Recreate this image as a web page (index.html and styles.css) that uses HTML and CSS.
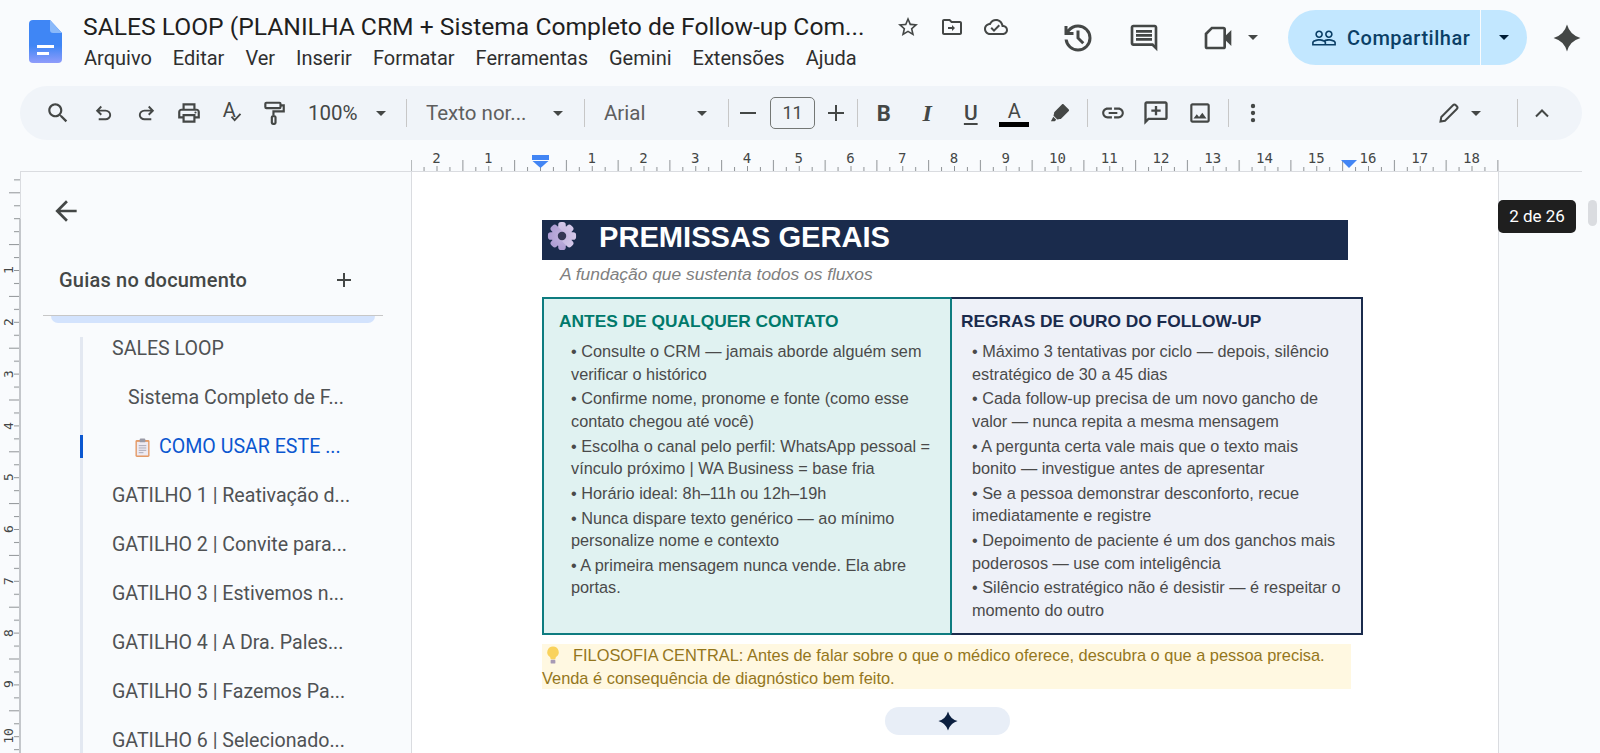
FILE: index.html
```html
<!DOCTYPE html>
<html lang="pt-BR">

<head>
    <meta charset="UTF-8" />
    <meta name="viewport" content="width=device-width, initial-scale=1.0">
    <title>SALES LOOP</title>
    <link rel="stylesheet" href="styles.css">
</head>

<body>
    <div class="app">
        <header class="header">
            <svg class="logo" viewBox="0 0 33 43">
                <defs>
                    <linearGradient id="docGrad" x1="0" y1="0" x2="0" y2="1">
                        <stop offset="0.6" stop-color="#3f86f5" />
                        <stop offset="1" stop-color="#8f9cfb" />
                    </linearGradient>
                </defs>
                <path d="M4 0H21L33 13V39a4 4 0 0 1-4 4H4a4 4 0 0 1-4-4V4a4 4 0 0 1 4-4z" fill="url(#docGrad)" />
                <path d="M21 0L33 13H24a3 3 0 0 1-3-3z" fill="#8ab9fa" />
                <path d="M8 25H25V28H8zM8 32H20V35H8z" fill="#fff" />
            </svg>
            <div class="title-col">
                <div class="title-row">
                    <span class="doc-title">SALES LOOP (PLANILHA CRM + Sistema Completo de Follow-up Com...</span>
                    <div class="title-icons">
                        <svg class="ic ic-24" viewBox="0 0 24 24"><path d="M22 9.24l-7.19-.62L12 2 9.19 8.63 2 9.24l5.46 4.73L5.82 21 12 17.27 18.18 21l-1.63-7.03L22 9.24zM12 15.4l-3.76 2.27 1-4.28-3.32-2.88 4.38-.38L12 6.1l1.71 4.04 4.38.38-3.32 2.88 1 4.28L12 15.4z" /></svg>
                        <svg class="ic ic-24" viewBox="0 0 24 24"><path d="M20 6h-8l-2-2H4c-1.1 0-2 .9-2 2v12c0 1.1.9 2 2 2h16c1.1 0 2-.9 2-2V8c0-1.1-.9-2-2-2zm0 12H4V6h5.17l2 2H20v10zM12 12H8v2h4v2l3-3-3-3z" /></svg>
                        <svg class="ic ic-24" viewBox="0 0 24 24"><path d="M19.35 10.04C18.67 6.59 15.64 4 12 4 9.11 4 6.6 5.64 5.35 8.04 2.34 8.36 0 10.91 0 14c0 3.31 2.69 6 6 6h13c2.76 0 5-2.24 5-5 0-2.64-2.05-4.78-4.65-4.96zM19 18H6c-2.21 0-4-1.79-4-4 0-2.05 1.53-3.76 3.56-3.97l1.07-.11.5-.95C8.08 7.14 9.94 6 12 6c2.62 0 4.88 1.86 5.39 4.43l.3 1.5 1.53.11c1.56.1 2.78 1.41 2.78 2.96 0 1.65-1.35 3-3 3zm-9-3.82l-2.09-2.09L6.5 13.5 10 17l6.01-6.01-1.41-1.41z" /></svg>
                    </div>
                </div>
                <nav class="menu">
                    <span>Arquivo</span>
                    <span>Editar</span>
                    <span>Ver</span>
                    <span>Inserir</span>
                    <span>Formatar</span>
                    <span>Ferramentas</span>
                    <span>Gemini</span>
                    <span>Extensões</span>
                    <span>Ajuda</span>
                </nav>
            </div>
            <div class="actions">
                <svg class="ic ic-36" viewBox="0 0 24 24"><path d="M12 21q-3.45 0-6.012-2.287T3.05 13H5.1q.35 2.6 2.313 4.3T12 19q2.925 0 4.963-2.037T19 12q0-2.925-2.037-4.963T12 5q-1.725 0-3.225.8T6.25 8H9v2H3V4h2v2.35q1.275-1.6 3.113-2.475T12 3q3.75 0 6.375 2.625T21 12q0 3.75-2.625 6.375T12 21Zm2.8-4.8L11 12.4V7h2v4.6l3.2 3.2-1.4 1.4Z" /></svg>
                <svg class="ic ic-32 gap-comment" viewBox="0 0 24 24"><path d="M21.99 4c0-1.1-.89-2-1.99-2H4c-1.1 0-2 .9-2 2v12c0 1.1.9 2 2 2h14l4 4-.01-18zM20 4v13.17L18.83 16H4V4h16zM6 12h12v2H6zm0-3h12v2H6zm0-3h12v2H6z" /></svg>
                <svg class="ic ic-32 gap-video" viewBox="0 0 24 24"><path d="M7 3.5h9a2 2 0 0 1 2 2v13a2 2 0 0 1-2 2H4a2 2 0 0 1-2-2V8.5zm.8 2L4 9.3V18.5h12V5.5z" /><path d="M18 10L22 6v12l-4-4z" /></svg>
                <span class="caret gap-caret"></span>
                <div class="share">
                    <div class="share-main">
                        <svg class="ic share-icon" viewBox="0 0 24 24"><path d="M16.5 13c-1.2 0-3.07.34-4.5 1-1.43-.67-3.3-1-4.5-1C5.33 13 1 14.08 1 16.25V19h22v-2.75c0-2.17-4.33-3.25-6.5-3.25zm-4 4.5h-10v-1.25c0-.54 2.56-1.75 5-1.75s5 1.21 5 1.75v1.25zm9 0H14v-1.25c0-.46-.2-.86-.52-1.22.88-.3 1.96-.53 3.02-.53 2.44 0 5 1.21 5 1.75v1.25zM7.5 12c1.93 0 3.5-1.57 3.5-3.5S9.43 5 7.5 5 4 6.57 4 8.5 5.57 12 7.5 12zm0-5.5c1.1 0 2 .9 2 2s-.9 2-2 2-2-.9-2-2 .9-2 2-2zm9 5.5c1.93 0 3.5-1.57 3.5-3.5S18.43 5 16.5 5 13 6.57 13 8.5s1.57 3.5 3.5 3.5zm0-5.5c1.1 0 2 .9 2 2s-.9 2-2 2-2-.9-2-2 .9-2 2-2z" /></svg>
                        <span>Compartilhar</span>
                    </div>
                    <div class="share-more"><span class="caret caret-dark"></span></div>
                </div>
                <svg class="ic gemini" viewBox="0 0 24 24"><path d="M12 .5Q14.5 9.5 23.5 12Q14.5 14.5 12 23.5Q9.5 14.5 .5 12Q9.5 9.5 12 .5Z" /></svg>
            </div>
        </header>

        <div class="toolbar">
            <div class="tb-btn"><svg class="ic ic-26" viewBox="0 0 24 24"><path d="M15.5 14h-.79l-.28-.27C15.41 12.59 16 11.11 16 9.5 16 5.91 13.09 3 9.5 3S3 5.91 3 9.5 5.91 16 9.5 16c1.61 0 3.09-.59 4.23-1.57l.27.28v.79l5 4.99L20.49 19l-4.99-5zm-6 0C7.01 14 5 11.99 5 9.5S7.01 5 9.5 5 14 7.01 14 9.5 11.99 14 9.5 14z" /></svg></div>
            <div class="tb-btn tb-undo"><svg class="ic ic-23" viewBox="0 0 24 24"><path d="M7 19v-2h7.1q1.575 0 2.738-1t1.162-2.5q0-1.5-1.162-2.5T14.1 10H7.8l2.6 2.6L9 14 4 9l5-5 1.4 1.4L7.8 8h6.3q2.425 0 4.163 1.575T20 13.5q0 2.35-1.737 3.925T14.1 19H7Z" /></svg></div>
            <div class="tb-btn"><svg class="ic ic-23 flip" viewBox="0 0 24 24"><path d="M7 19v-2h7.1q1.575 0 2.738-1t1.162-2.5q0-1.5-1.162-2.5T14.1 10H7.8l2.6 2.6L9 14 4 9l5-5 1.4 1.4L7.8 8h6.3q2.425 0 4.163 1.575T20 13.5q0 2.35-1.737 3.925T14.1 19H7Z" /></svg></div>
            <div class="tb-btn"><svg class="ic ic-26" viewBox="0 0 24 24"><path d="M19 8h-1V3H6v5H5c-1.66 0-3 1.34-3 3v6h4v4h12v-4h4v-6c0-1.66-1.34-3-3-3zM8 5h8v3H8V5zm8 12v2H8v-4h8v2zm2-2v-2H6v2H4v-4c0-.55.45-1 1-1h14c.55 0 1 .45 1 1v4h-2z" /><circle cx="18" cy="11.5" r="1" /></svg></div>
            <div class="tb-btn spell">
                <span class="spell-a">A</span>
                <svg class="spell-check" viewBox="0 0 12 10"><path d="M1 4l3.5 4L11 1" /></svg>
            </div>
            <div class="tb-btn"><svg class="ic-line ic-26" viewBox="0 0 24 24"><rect x="4" y="2.5" width="14" height="5" rx="1" /><path d="M18 5h3v5.5H11.5V14.5" /><rect x="10" y="15" width="3.4" height="7" rx="1" /></svg></div>
            <div class="tb-zoom">
                <span class="tb-text">100%</span>
                <span class="caret"></span>
            </div>
            <span class="tb-sep"></span>
            <div class="tb-select tb-style">
                <span class="tb-text">Texto nor...</span>
                <span class="caret"></span>
            </div>
            <span class="tb-sep"></span>
            <div class="tb-select tb-font">
                <span class="tb-text">Arial</span>
                <span class="caret"></span>
            </div>
            <span class="tb-sep"></span>
            <div class="tb-size">
                <span class="size-sign">
                    <svg class="ic ic-20" viewBox="0 0 20 20"><path d="M2 9h16v2H2z" /></svg>
                </span>
                <span class="size-box">11</span>
                <span class="size-sign size-plus">
                    <svg class="ic ic-20" viewBox="0 0 20 20"><path d="M2 9h7V2h2v7h7v2h-7v7H9v-7H2z" /></svg>
                </span>
            </div>
            <span class="tb-sep"></span>
            <div class="tb-btn tb-wide tb-b">B</div>
            <div class="tb-btn tb-wide tb-i">I</div>
            <div class="tb-btn tb-wide tb-u">U</div>
            <div class="tb-btn tb-wide tb-a">
                <span>A</span>
                <span class="color-bar"></span>
            </div>
            <div class="tb-btn tb-wide tb-mark"><svg class="ic ic-24" viewBox="0 0 24 24"><path d="M15.5 3.2l5.3 5.3c.4.4.4 1 0 1.4l-8 8-1 .1-2.4.6-3.9-3.9.6-2.4.1-1 7.9-8.1c.4-.4 1-.4 1.4 0zM5.3 15.7l3 3-1.6 1.5H2.9z" /></svg></div>
            <span class="tb-sep sep-insert"></span>
            <div class="tb-btn tb-wide tb-link"><svg class="ic ic-26" viewBox="0 0 24 24"><path d="M3.9 12c0-1.71 1.39-3.1 3.1-3.1h4V7H7c-2.76 0-5 2.24-5 5s2.24 5 5 5h4v-1.9H7c-1.71 0-3.1-1.39-3.1-3.1zM8 13h8v-2H8v2zm9-6h-4v1.9h4c1.71 0 3.1 1.39 3.1 3.1s-1.39 3.1-3.1 3.1h-4V17h4c2.76 0 5-2.24 5-5s-2.24-5-5-5z" /></svg></div>
            <div class="tb-btn tb-wide"><svg class="ic ic-28" viewBox="0 0 24 24"><path d="M4 2h16c1.1 0 2 .9 2 2v12c0 1.1-.9 2-2 2H6l-4 4V4c0-1.1.9-2 2-2zm0 2v13.2L5.2 16H20V4zM11 6h2v3h3v2h-3v3h-2v-3H8V9h3z" /></svg></div>
            <div class="tb-btn tb-wide"><svg class="ic ic-26" viewBox="0 0 24 24"><path d="M19 5v14H5V5h14m0-2H5c-1.1 0-2 .9-2 2v14c0 1.1.9 2 2 2h14c1.1 0 2-.9 2-2V5c0-1.1-.9-2-2-2zm-4.86 8.86l-3 3.87L9 13.14 6 17h12l-3.86-5.14z" /></svg></div>
            <span class="tb-sep sep-more"></span>
            <div class="tb-btn tb-wide tb-link"><svg class="ic ic-26" viewBox="0 0 24 24"><circle cx="12" cy="5.5" r="2" /><circle cx="12" cy="12" r="2" /><circle cx="12" cy="18.5" r="2" /></svg></div>
            <div class="tb-mode">
                <svg class="ic-line ic-24" viewBox="0 0 24 24"><path d="M3.5 20.5l.8-4.5L16 4.2c.8-.8 2-.8 2.8 0l1 1c.8.8.8 2 0 2.8L8 19.7z" /></svg>
                <span class="caret"></span>
            </div>
            <span class="tb-sep sep-collapse"></span>
            <svg class="chevron" viewBox="0 0 16 10"><path d="M2 8.5L8 2.5l6 6" /></svg>
        </div>

        <svg class="ruler" viewBox="0 0 1600 32">
            <defs>
                <pattern id="hTicks" x="540" y="0" width="51.75" height="32" patternUnits="userSpaceOnUse">
                    <rect x="0" y="26" width="1" height="5" />
                    <rect x="12.9" y="27" width="1" height="4" />
                    <rect x="25.9" y="20" width="1" height="11" />
                    <rect x="38.8" y="27" width="1" height="4" />
                </pattern>
            </defs>
            <rect x="411" y="18" width="1088" height="13" fill="url(#hTicks)" />
            <rect x="20" y="31" width="1562" height="1" class="ruler-line" />
            <g class="ruler-nums">
                <text x="436.5" y="23">2</text>
                <text x="488.25" y="23">1</text>
                <text x="591.75" y="23">1</text>
                <text x="643.5" y="23">2</text>
                <text x="695.25" y="23">3</text>
                <text x="747" y="23">4</text>
                <text x="798.75" y="23">5</text>
                <text x="850.5" y="23">6</text>
                <text x="902.25" y="23">7</text>
                <text x="954" y="23">8</text>
                <text x="1005.75" y="23">9</text>
                <text x="1057.5" y="23">10</text>
                <text x="1109.25" y="23">11</text>
                <text x="1161" y="23">12</text>
                <text x="1212.75" y="23">13</text>
                <text x="1264.5" y="23">14</text>
                <text x="1316.25" y="23">15</text>
                <text x="1368" y="23">16</text>
                <text x="1419.75" y="23">17</text>
                <text x="1471.5" y="23">18</text>
            </g>
            <rect x="532" y="15" width="17" height="5" class="ruler-mark" />
            <path d="M532.5 21h16l-8 7z" class="ruler-mark" />
            <path d="M1341 20h16l-8 8z" class="ruler-mark" />
        </svg>

        <div class="workspace">
            <svg class="v-ruler" viewBox="0 0 21 581">
                <defs>
                    <pattern id="vTicks" x="0" y="98" width="21" height="51.8" patternUnits="userSpaceOnUse">
                        <rect x="14" y="0" width="6" height="1" />
                        <rect x="14" y="13" width="6" height="1" />
                        <rect x="9" y="25.9" width="11" height="1" />
                        <rect x="14" y="38.9" width="6" height="1" />
                    </pattern>
                </defs>
                <rect x="0" y="0" width="20" height="581" fill="url(#vTicks)" />
                <rect x="20" y="0" width="1" height="47" class="ruler-line" />
                <rect x="19" y="47" width="2" height="534" class="ruler-dark" />
                <g class="ruler-nums v-nums">
                    <text transform="translate(12.5 98) rotate(-90)">1</text>
                    <text transform="translate(12.5 150) rotate(-90)">2</text>
                    <text transform="translate(12.5 202) rotate(-90)">3</text>
                    <text transform="translate(12.5 254) rotate(-90)">4</text>
                    <text transform="translate(12.5 305) rotate(-90)">5</text>
                    <text transform="translate(12.5 357) rotate(-90)">6</text>
                    <text transform="translate(12.5 409) rotate(-90)">7</text>
                    <text transform="translate(12.5 461) rotate(-90)">8</text>
                    <text transform="translate(12.5 512) rotate(-90)">9</text>
                    <text transform="translate(12.5 564) rotate(-90)">10</text>
                </g>
            </svg>

            <aside class="sidebar">
                <svg class="back" viewBox="0 0 24 24"><path d="M20 11H7.83l5.59-5.59L12 4l-8 8 8 8 1.41-1.41L7.83 13H20v-2z" /></svg>
                <div class="guides-head">
                    <span>Guias no documento</span>
                    <svg class="ic ic-20" viewBox="0 0 20 20"><path d="M3 9h6V3h2v6h6v2h-6v6H9v-6H3z" /></svg>
                </div>
                <div class="guides-line"></div>
                <div class="guides-strip"></div>
                <ul class="outline">
                    <li class="lvl-1">SALES LOOP</li>
                    <li class="lvl-2">Sistema Completo de F...</li>
                    <li class="lvl-3 active">
                        <svg class="clipboard" viewBox="0 0 16 20">
                            <rect x="0.5" y="2" width="15" height="18" rx="1.5" fill="#e49a66" />
                            <rect x="2" y="4" width="12" height="14.5" fill="#eeeaf2" />
                            <rect x="5" y="0.5" width="6" height="4" rx="1" fill="#9a9aa6" />
                            <path d="M4 8h8M4 10.5h8M4 13h8M4 15.5h5" stroke="#a5a5b3" stroke-width="1" />
                        </svg>
                        COMO USAR ESTE ...
                    </li>
                    <li class="lvl-1">GATILHO 1 | Reativação d...</li>
                    <li class="lvl-1">GATILHO 2 | Convite para...</li>
                    <li class="lvl-1">GATILHO 3 | Estivemos n...</li>
                    <li class="lvl-1">GATILHO 4 | A Dra. Pales...</li>
                    <li class="lvl-1">GATILHO 5 | Fazemos Pa...</li>
                    <li class="lvl-1">GATILHO 6 | Selecionado...</li>
                </ul>
            </aside>

            <main class="doc">
                <div class="banner">
                    <svg class="gear" viewBox="0 0 32 32">
                        <defs>
                            <linearGradient id="gearGrad" x1="0" y1="0" x2="0" y2="1">
                                <stop offset="0" stop-color="#d5c9ea" />
                                <stop offset="1" stop-color="#ad9cd3" />
                            </linearGradient>
                        </defs>
                        <g fill="url(#gearGrad)">
                            <circle cx="16" cy="16" r="11" />
                            <rect x="12" y="1" width="8" height="30" rx="3" />
                            <rect x="12" y="1" width="8" height="30" rx="3" transform="rotate(45 16 16)" />
                            <rect x="12" y="1" width="8" height="30" rx="3" transform="rotate(90 16 16)" />
                            <rect x="12" y="1" width="8" height="30" rx="3" transform="rotate(135 16 16)" />
                        </g>
                        <circle cx="16" cy="16" r="4.5" fill="#343755" />
                    </svg>
                    <h1>PREMISSAS GERAIS</h1>
                </div>
                <p class="subtitle">A fundação que sustenta todos os fluxos</p>

                <div class="premises">
                    <section class="cell cell-teal">
                        <h2>ANTES DE QUALQUER CONTATO</h2>
                        <ul>
                            <li>• Consulte o CRM — jamais aborde alguém sem verificar o histórico</li>
                            <li>• Confirme nome, pronome e fonte (como esse contato chegou até você)</li>
                            <li>• Escolha o canal pelo perfil: WhatsApp pessoal = vínculo próximo | WA Business = base fria</li>
                            <li>• Horário ideal: 8h–11h ou 12h–19h</li>
                            <li>• Nunca dispare texto genérico — ao mínimo personalize nome e contexto</li>
                            <li>• A primeira mensagem nunca vende. Ela abre portas.</li>
                        </ul>
                    </section>
                    <section class="cell cell-navy">
                        <h2>REGRAS DE OURO DO FOLLOW-UP</h2>
                        <ul>
                            <li>• Máximo 3 tentativas por ciclo — depois, silêncio estratégico de 30 a 45 dias</li>
                            <li>• Cada follow-up precisa de um novo gancho de valor — nunca repita a mesma mensagem</li>
                            <li>• A pergunta certa vale mais que o texto mais bonito — investigue antes de apresentar</li>
                            <li>• Se a pessoa demonstrar desconforto, recue imediatamente e registre</li>
                            <li>• Depoimento de paciente é um dos ganchos mais poderosos — use com inteligência</li>
                            <li>• Silêncio estratégico não é desistir — é respeitar o momento do outro</li>
                        </ul>
                    </section>
                </div>

                <div class="callout">
                    <svg class="bulb" viewBox="0 0 14 20">
                        <path d="M7 .5a6 6 0 0 1 3.5 10.9c-.7.6-1 1.5-1 2.6h-5c0-1.1-.3-2-1-2.6A6 6 0 0 1 7 .5z" fill="#f9d25c" />
                        <rect x="4.5" y="14.5" width="5" height="4" rx="1" fill="#a79ab5" />
                    </svg>FILOSOFIA CENTRAL: Antes de falar sobre o que o médico oferece, descubra o que a pessoa precisa. Venda é consequência de diagnóstico bem feito.
                </div>

                <div class="ai-pill">
                    <svg viewBox="0 0 24 24"><path d="M12 .5Q14.5 9.5 23.5 12Q14.5 14.5 12 23.5Q9.5 14.5 .5 12Q9.5 9.5 12 .5Z" /></svg>
                </div>
            </main>
        </div>

        <div class="page-tip">2 de 26</div>
        <div class="scroll-thumb"></div>
    </div>
</body>

</html>
```

FILE: styles.css
```css
* {
    box-sizing: border-box;
}

body {
    margin: 0;
    font-family: Roboto, 'Liberation Sans', sans-serif;
    background-color: #f9fbfd;
    color: #444746;
}

.app {
    position: relative;
    width: 1600px;
    height: 753px;
    overflow: hidden;
    display: flex;
    flex-direction: column;
}

/* icons */
.ic {
    display: block;
    fill: currentColor;
    flex: none;
}

.ic-line {
    display: block;
    fill: none;
    stroke: currentColor;
    stroke-width: 2;
    flex: none;
}

.ic-20 { width: 20px; height: 20px; }
.ic-23 { width: 23px; height: 23px; }
.ic-24 { width: 24px; height: 24px; }
.ic-26 { width: 26px; height: 26px; }
.ic-28 { width: 28px; height: 28px; }
.ic-32 { width: 32px; height: 32px; }
.ic-36 { width: 36px; height: 36px; }

.flip {
    transform: scaleX(-1);
}

.caret {
    flex: none;
    width: 0;
    height: 0;
    border-left: 5px solid transparent;
    border-right: 5px solid transparent;
    border-top: 5px solid #444746;
}

.caret-dark {
    border-top-color: #001d35;
}

/* header */
.header {
    display: flex;
    height: 86px;
    flex: none;
}

.logo {
    width: 33px;
    height: 43px;
    margin: 20px 21px 0 29px;
    flex: none;
}

.title-col {
    display: flex;
    flex-direction: column;
}

.title-row {
    display: flex;
    align-items: center;
    height: 36px;
    margin-top: 9px;
}

.doc-title {
    width: 782px;
    font-size: 24.65px;
    line-height: 36px;
    color: #1f1f1f;
    white-space: nowrap;
}

.title-icons {
    display: flex;
    gap: 20px;
    margin-left: 31px;
}

.menu {
    display: flex;
    gap: 21px;
    margin-top: 1px;
    padding-left: 1px;
    font-size: 20px;
    line-height: 24px;
    color: #2f2f2f;
}

.actions {
    display: flex;
    align-items: center;
    position: absolute;
    top: 10px;
    right: 19px;
    height: 55px;
}

.gap-comment { margin-left: 32px; }
.gap-video { margin-left: 42px; }
.gap-caret { margin-left: 14px; }

.share {
    display: flex;
    height: 55px;
    margin-left: 30px;
    border-radius: 28px;
    overflow: hidden;
    background: #c2e7ff;
    color: #0b3f66;
    font-size: 20px;
    font-weight: 500;
    letter-spacing: 0.5px;
}

.share-main {
    display: flex;
    align-items: center;
    gap: 10px;
    width: 193px;
    padding-left: 23px;
    border-right: 1px solid #f9fbfd;
}

.share-icon {
    width: 26px;
    height: 26px;
}

.share-more {
    display: flex;
    align-items: center;
    justify-content: center;
    width: 46px;
}

.gemini {
    width: 28px;
    height: 28px;
    margin-left: 26px;
}

/* toolbar */
.toolbar {
    display: flex;
    align-items: center;
    flex: none;
    height: 54px;
    margin: 0 18px 0 20px;
    padding-left: 17px;
    border-radius: 27px;
    background: #f0f4f9;
}

.tb-btn {
    display: flex;
    align-items: center;
    justify-content: center;
    flex: none;
    width: 42.5px;
    height: 34px;
}

.tb-wide {
    width: 43.5px;
}

.tb-undo {
    margin-left: 3px;
}

.tb-text {
    font-size: 20.5px;
    white-space: nowrap;
}

.tb-zoom {
    display: flex;
    align-items: center;
    width: 98px;
    margin-left: 13px;
    gap: 18px;
}

.tb-sep {
    flex: none;
    width: 1px;
    height: 28px;
    background: #c7c7c7;
}

.tb-select {
    display: flex;
    align-items: center;
    justify-content: space-between;
    padding: 0 21px 0 19px;
    color: #5e5e5e;
}

.tb-style {
    width: 177px;
}

.tb-font {
    width: 143px;
}

.tb-size {
    display: flex;
    align-items: center;
    flex: none;
    width: 128px;
}

.size-sign {
    display: flex;
    justify-content: center;
    width: 38px;
    margin-right: 3px;
}

.size-plus {
    width: 42px;
    margin-right: 0;
}

.size-box {
    width: 45px;
    height: 32px;
    border: 1px solid #747775;
    border-radius: 5px;
    font-size: 18px;
    line-height: 30px;
    text-align: center;
}

.tb-b {
    margin-left: 4px;
    font-size: 22px;
    font-weight: 700;
}

.tb-i {
    font-family: 'Liberation Serif', serif;
    font-size: 24px;
    font-weight: 700;
    font-style: italic;
}

.tb-u {
    font-size: 21px;
    font-weight: 500;
    text-decoration: underline;
    text-decoration-thickness: 2px;
    text-underline-offset: 3px;
}

.tb-a {
    flex-direction: column;
    font-size: 20px;
    line-height: 22px;
}

.color-bar {
    width: 30px;
    height: 5px;
    background: #000;
}

.tb-mark {
    margin-left: 2px;
}

.sep-insert {
    margin-left: 5.5px;
}

.tb-link {
    margin-left: 3px;
}

.sep-more {
    margin-left: 6px;
}

.spell {
    position: relative;
}

.spell-a {
    font-size: 20px;
    margin: -6px 4px 0 0;
}

.spell-check {
    position: absolute;
    left: 20px;
    bottom: 8px;
    width: 12px;
    height: 9px;
    fill: none;
    stroke: #444746;
    stroke-width: 2;
}

.tb-mode {
    display: flex;
    align-items: center;
    gap: 10px;
    flex: none;
    margin-left: 162px;
}

.sep-collapse {
    margin-left: 36px;
}

.chevron {
    width: 16px;
    height: 10px;
    margin-left: 16px;
    fill: none;
    stroke: #444746;
    stroke-width: 2;
}

/* rulers */
.ruler {
    display: block;
    flex: none;
    width: 1600px;
    height: 32px;
    fill: #8f9396;
}

.ruler-line { fill: #dadce0; }
.ruler-dark { fill: #c4c7cb; }
.ruler-mark { fill: #4285f4; }

.ruler-nums text {
    font-family: 'DejaVu Sans Mono', monospace;
    font-size: 14px;
    text-anchor: middle;
    fill: #444746;
}

.v-nums text {
    font-size: 13px;
}

.workspace {
    display: flex;
    flex: 1;
    min-height: 0;
}

.v-ruler {
    display: block;
    flex: none;
    width: 21px;
    height: 581px;
    fill: #8f9396;
}

/* sidebar */
.sidebar {
    flex: none;
    width: 390px;
}

.back {
    display: block;
    width: 32px;
    height: 32px;
    margin: 23px 0 0 29px;
    fill: #444746;
}

.guides-head {
    display: flex;
    align-items: center;
    justify-content: space-between;
    width: 295px;
    height: 24px;
    margin: 41px 0 0 38px;
    font-size: 20px;
    font-weight: 500;
    letter-spacing: 0.2px;
}

.guides-line {
    width: 340px;
    height: 1px;
    margin: 23px 0 0 22px;
    background: #c7c7c7;
}

.guides-strip {
    width: 324px;
    height: 7px;
    margin-left: 30px;
    border-radius: 0 0 12px 12px;
    background: #d3e3fd;
}

.outline {
    list-style: none;
    margin: 14px 0 0 59px;
    padding: 0;
    border-left: 3px solid #e3e8f1;
    font-size: 19.6px;
    line-height: 24px;
    color: #4f5254;
    white-space: nowrap;
}

.outline li {
    position: relative;
    height: 24px;
    margin-bottom: 25px;
}

.lvl-1 { padding-left: 29px; }
.lvl-2 { padding-left: 45px; }
.lvl-3 { padding-left: 52px; }

.outline .active {
    display: flex;
    align-items: center;
    gap: 9px;
    color: #0b57d0;
}

.outline .active::before {
    content: "";
    position: absolute;
    left: -3px;
    top: 0;
    width: 3px;
    height: 23px;
    background: #0b57d0;
}

.clipboard {
    width: 15px;
    height: 19px;
    flex: none;
}

/* document page */
.doc {
    flex: none;
    width: 1088px;
    padding: 48px 0 0 130px;
    border-left: 1px solid #dadce0;
    border-right: 1px solid #dadce0;
    background: #fff;
    font-family: 'Liberation Sans', Arial, sans-serif;
    overflow: hidden;
}

.banner {
    display: flex;
    align-items: center;
    gap: 22px;
    width: 806px;
    height: 40px;
    padding-left: 5px;
    background: #1a2b4c;
}

.gear {
    width: 30px;
    height: 30px;
    flex: none;
    margin-top: -8px;
}

.banner h1 {
    margin: -6px 0 0;
    font-size: 29.1px;
    font-weight: 700;
    color: #fff;
}

.subtitle {
    margin: 3px 0 0 18px;
    font-size: 17.4px;
    font-style: italic;
    line-height: 22px;
    color: #808080;
}

.premises {
    display: grid;
    grid-template-columns: 409px 412px;
    height: 338px;
    margin-top: 12px;
    width: 821px;
}

.cell {
    border: 2px solid;
}

.cell h2 {
    margin: 12px 0 0;
    font-size: 17.35px;
    font-weight: 700;
    line-height: 20px;
}

.cell ul {
    list-style: none;
    margin: 9px 0 0;
    padding: 0;
    font-size: 16.3px;
    line-height: 22.5px;
    color: #4a4a4a;
}

.cell li {
    margin-bottom: 2.3px;
}

.cell-teal {
    border-color: #0e7c80;
    border-right-width: 1px;
    background: #e0f2f1;
}

.cell-teal h2 {
    padding-left: 15px;
    color: #00796b;
}

.cell-teal ul {
    padding: 0 14px 0 27px;
}

.cell-navy {
    border-color: #1a2b4c;
    border-left: 1px solid #0e7c80;
    background: #eef1f8;
}

.cell-navy h2 {
    padding-left: 9px;
    color: #1a2b4c;
}

.cell-navy ul {
    padding: 0 16px 0 20px;
}

.callout {
    width: 809px;
    height: 45px;
    margin-top: 9px;
    background: #fff8e1;
    color: #94761c;
    font-size: 16.4px;
    line-height: 22.5px;
}

.bulb {
    display: inline-block;
    width: 14px;
    height: 19px;
    margin: 0 13px 0 4px;
    vertical-align: -4px;
}

.ai-pill {
    display: flex;
    align-items: center;
    justify-content: center;
    width: 125px;
    height: 28px;
    margin: 18px 0 0 343px;
    border-radius: 14px;
    background: #e8eef7;
}

.ai-pill svg {
    width: 20px;
    height: 20px;
    fill: #0b1f3f;
}

/* overlays */
.page-tip {
    position: absolute;
    left: 1498px;
    top: 200px;
    width: 78px;
    height: 33px;
    border-radius: 5px;
    background: #1f1f1f;
    color: #fff;
    font-size: 17px;
    line-height: 33px;
    text-align: center;
}

.scroll-thumb {
    position: absolute;
    left: 1588px;
    top: 200px;
    width: 9px;
    height: 26px;
    border-radius: 5px;
    background: #dadce0;
}
```
